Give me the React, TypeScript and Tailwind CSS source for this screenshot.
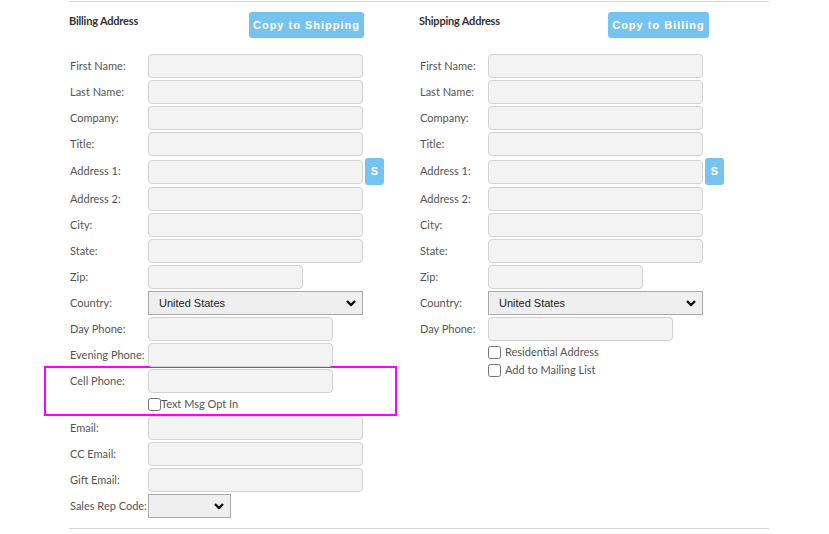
import React from 'react';

type Row = { label: string; kind?: 'text' | 'select' | 'addr' | 'rep'; w?: string };

const billingRows: Row[] = [
    { label: 'First Name:' },
    { label: 'Last Name:' },
    { label: 'Company:' },
    { label: 'Title:' },
    { label: 'Address 1:', kind: 'addr' },
    { label: 'Address 2:' },
    { label: 'City:' },
    { label: 'State:' },
    { label: 'Zip:', w: 'w-[155px]' },
    { label: 'Country:', kind: 'select' },
    { label: 'Day Phone:', w: 'w-[185px]' },
    { label: 'Evening Phone:', w: 'w-[185px]' },
];

const shippingRows: Row[] = billingRows.slice(0, 11);

const Chevron: React.FC = () => (
    <svg width="10" height="7" viewBox="0 0 10 7" className="absolute right-[6px] top-1/2 -translate-y-1/2">
        <path d="M1 1.5 L5 5.5 L9 1.5" fill="none" stroke="#111" strokeWidth="2.4" />
    </svg>
);

const TextBox: React.FC<{ w?: string }> = ({ w = 'w-[215px]' }) => (
    <div className={`${w} h-[24px] bg-[#f3f3f3] border border-[#d2d2d2] rounded-[4px]`} />
);

const Field: React.FC<{ row: Row; labelW: string }> = ({ row, labelW }) => (
    <div className="flex items-center mb-[2px]">
        <div className={`${labelW} pl-px text-[11px] text-[#555] whitespace-nowrap`}>{row.label}</div>
        {row.kind === 'select' ? (
            <div className="relative w-[215px] h-[24px] bg-[#efefef] border border-[#a9a9a9] flex items-center pl-[10px] font-['Liberation_Sans'] text-[11px] text-[#222]">
                United States
                <Chevron />
            </div>
        ) : row.kind === 'addr' ? (
            <div className="flex items-center">
                <TextBox />
                <div className="ml-[2px] w-[19px] h-[27px] bg-[#76c3ef] rounded-[3px] flex items-center justify-center text-white font-bold text-[11px] font-['Liberation_Sans']">
                    S
                </div>
            </div>
        ) : (
            <TextBox w={row.w} />
        )}
    </div>
);

const CheckRow: React.FC<{ text: string; gap?: string; h?: string }> = ({ text, gap = 'ml-[4px]', h = 'h-[18px]' }) => (
    <div className={`flex items-center ${h}`}>
        <input type="checkbox" className="m-0 w-[13px] h-[13px]" />
        <span className={`${gap} text-[11px] text-[#555]`}>{text}</span>
    </div>
);

const App: React.FC = () => {
    return (
        <div className="w-[829px] h-[534px] bg-white font-['Lato',sans-serif] overflow-hidden">
            <div className="ml-[69px] w-[700px] mt-px border-t border-[#d4d4d4]">
                <div className="flex">
                    {/* billing */}
                    <div className="w-[350px]">
                        <div className="flex h-[52px]">
                            <h3 className="w-[180px] mt-[11px] text-[11px] font-bold text-[#333] tracking-[-0.2px]">Billing Address</h3>
                            <button className="mt-[10px] w-[115px] h-[26px] bg-[#76c3ef] rounded-[3px] text-white font-bold text-[11px] tracking-[1px] font-['Liberation_Sans']">
                                Copy to Shipping
                            </button>
                        </div>
                        {billingRows.map(r => (
                            <Field key={r.label} row={r} labelW="w-[79px]" />
                        ))}
                        {/* highlighted cell phone block */}
                        <div className="border-2 border-[#ff00ff] -ml-[25px] pl-[23px] w-[353px] -mt-[3px] pt-px">
                            <Field row={{ label: 'Cell Phone:', w: 'w-[185px]' }} labelW="w-[79px]" />
                            <div className="ml-[79px]">
                                <CheckRow text="Text Msg Opt In" gap="ml-0" h="h-[19px]" />
                            </div>
                        </div>
                        <Field row={{ label: 'Email:' }} labelW="w-[79px]" />
                        <Field row={{ label: 'CC Email:' }} labelW="w-[79px]" />
                        <Field row={{ label: 'Gift Email:' }} labelW="w-[79px]" />
                        <div className="flex items-center">
                            <div className="w-[79px] pl-px text-[11px] text-[#555] whitespace-nowrap">Sales Rep Code:</div>
                            <div className="relative w-[83px] h-[24px] bg-[#efefef] border border-[#a9a9a9]">
                                <Chevron />
                            </div>
                        </div>
                    </div>
                    {/* shipping */}
                    <div className="w-[350px]">
                        <div className="flex h-[52px]">
                            <h3 className="w-[189px] mt-[11px] text-[11px] font-bold text-[#333] tracking-[-0.2px]">Shipping Address</h3>
                            <button className="mt-[10px] w-[101px] h-[26px] bg-[#76c3ef] rounded-[3px] text-white font-bold text-[11px] tracking-[1px] font-['Liberation_Sans']">
                                Copy to Billing
                            </button>
                        </div>
                        {shippingRows.map(r => (
                            <Field key={r.label} row={r} labelW="w-[69px]" />
                        ))}
                        <div className="ml-[69px]">
                            <CheckRow text="Residential Address" />
                            <CheckRow text="Add to Mailing List" />
                        </div>
                    </div>
                </div>
                <div className="mt-[10px] border-t border-[#d4d4d4]" />
            </div>
        </div>
    );
};

export default App;
